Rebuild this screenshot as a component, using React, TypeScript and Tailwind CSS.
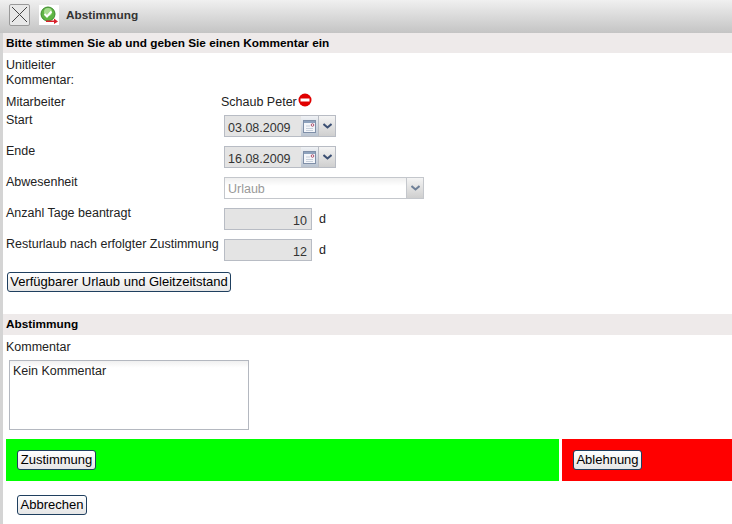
import type { ReactNode } from "react";

const FONT = "font-['Liberation_Sans',Arial,sans-serif]";

function Chevron({ color = "#3b4f73" }: { color?: string }) {
  return (
    <svg width="9" height="6" viewBox="0 0 9 6">
      <path d="M0.500 1 L4.500 4.500 L8.500 1" fill="none" stroke={color} strokeWidth="2" />
    </svg>
  );
}

function CalendarIcon() {
  return (
    <svg width="13" height="13" viewBox="0 0 13 13">
      <rect x="0.500" y="0.500" width="12" height="12" fill="#f4f6fa" stroke="#7f8fa8" />
      <rect x="1" y="1" width="11" height="2" fill="#8ea2bd" />
      <path d="M3 6h4M3 8.500h7M3 10.500h7" stroke="#c6cfdb" />
      <circle cx="9.500" cy="5" r="1.300" fill="#fff" stroke="#a03050" strokeWidth="0.800" />
    </svg>
  );
}

function Row({ label, children }: { label: string; children: ReactNode }) {
  return (
    <div className="flex">
      <div className="w-[221px] shrink-0 pl-[3px] pt-[1px]">{label}</div>
      <div className="mt-[3px]">{children}</div>
    </div>
  );
}

function DateField({ value }: { value: string }) {
  return (
    <div className="flex h-[22px] w-[112px] border border-[#b8bcc4] bg-[#e4e4e4] text-[#333]">
      <div className="flex-1 pl-[3px] pt-[1px] leading-[22px]">{value}</div>
      <div className="flex w-[17px] items-center justify-center bg-gradient-to-b from-[#f0f2f5] to-[#b9c3d0]">
        <CalendarIcon />
      </div>
      <div className="flex w-[17px] items-center justify-center border-l border-[#b8bcc4] bg-gradient-to-b from-[#f4f4f4] to-[#cfcfcf]">
        <Chevron />
      </div>
    </div>
  );
}

function NumberField({ value }: { value: string }) {
  return (
    <div className="flex items-center gap-[7px]">
      <div className="h-[22px] w-[88px] border border-[#b8bcc4] bg-[#e4e4e4] pr-[4px] pt-[1px] text-right leading-[22px] text-[#333]">
        {value}
      </div>
      <span>d</span>
    </div>
  );
}

function Btn({ children, className = "" }: { children: ReactNode; className?: string }) {
  return (
    <button
      type="button"
      className={`h-[20px] rounded-[3px] border border-[#1f3f5f] bg-gradient-to-b from-white to-[#e6e6e6] text-[13px] leading-[18px] text-black ${className}`}
    >
      {children}
    </button>
  );
}

function SectionHead({ children, className = "" }: { children: ReactNode; className?: string }) {
  return (
    <div className={`bg-[#eeeaea] pl-[3px] text-[11.8px] font-bold text-black ${className}`}>{children}</div>
  );
}

export default function App() {
  return (
    <div className={`${FONT} h-[524px] w-[732px] overflow-hidden bg-white text-[12.5px] leading-[14px] text-[#222]`}>
      {/* title bar */}
      <div className="flex h-[33px] items-center bg-gradient-to-b from-[#f0f0f0] to-[#c4c4c4] pl-[9px] pb-[4px]">
        <div className="flex h-[22px] w-[21px] items-center justify-center rounded-[2px] border border-[#999] bg-[#e8e8e8]">
          <svg width="17" height="17" viewBox="0 0 17 17">
            <path d="M1 1 L16 16 M16 1 L1 16" stroke="#444" strokeWidth="1" />
          </svg>
        </div>
        <div className="ml-[9px] flex h-[20px] w-[20px] items-center justify-center bg-white">
          <svg width="18" height="18" viewBox="0 0 18 18">
            <circle cx="8" cy="8" r="7" fill="#5fb544" stroke="#3d8a2e" />
            <circle cx="8" cy="6" r="4" fill="#a6dc8e" />
            <path d="M4.500 8 L7 10.500 L11.500 5.500" fill="none" stroke="#fff" strokeWidth="2" />
            <path d="M6 14.500h8v-2l4 3-4 2.500v-2h-8z" fill="#d8202a" />
          </svg>
        </div>
        <span className="ml-[7px] text-[11.8px] font-bold text-[#333]">Abstimmung</span>
      </div>

      <div className="h-[491px] border-l-[3px] border-[#d4d4d4]">
        <SectionHead className="h-[20px] leading-[20px]">
          Bitte stimmen Sie ab und geben Sie einen Kommentar ein
        </SectionHead>

        <div className="mt-[5px] w-[70px] pl-[3px] leading-[15px]">Unitleiter Kommentar:</div>

        <div className="mt-[7px] flex h-[14px] items-center">
          <div className="w-[218px] shrink-0 pl-[3px]">Mitarbeiter</div>
          <span>Schaub Peter</span>
          <svg className="mb-[4px] ml-[1px]" width="14" height="14" viewBox="0 0 14 14">
            <circle cx="7" cy="7" r="6.500" fill="#e00000" />
            <rect x="2.500" y="5.500" width="9" height="3" fill="#fff" />
          </svg>
        </div>

        <div className="mt-[3px] flex flex-col gap-[6px]">
          <Row label="Start"><DateField value="03.08.2009" /></Row>
          <Row label="Ende"><DateField value="16.08.2009" /></Row>
          <Row label="Abwesenheit">
            <div className="flex h-[22px] w-[200px] border border-[#c4c7cc] text-[#999]">
              <div className="flex-1 bg-gradient-to-b from-[#efefef] to-white to-40% pl-[3px] pt-[1px] leading-[21px]">Urlaub</div>
              <div className="flex w-[17px] items-center justify-center border-l border-[#c4c7cc] bg-gradient-to-b from-[#f4f4f4] to-[#cfcfcf]">
                <Chevron color="#6f8098" />
              </div>
            </div>
          </Row>
          <Row label="Anzahl Tage beantragt"><NumberField value="10" /></Row>
          <Row label="Resturlaub nach erfolgter Zustimmung"><NumberField value="12" /></Row>
        </div>

        <Btn className="mt-[11px] ml-[4px] block w-[224px]">Verfügbarer Urlaub und Gleitzeitstand</Btn>

        <SectionHead className="mt-[22px] h-[21px] leading-[21px]">Abstimmung</SectionHead>

        <div className="mt-[5px] pl-[3px]">Kommentar</div>

        <div className="mt-[6px] ml-[6px] h-[70px] w-[240px] border border-[#b4b8c0] bg-gradient-to-b from-[#f0f0f0] to-white to-10% pl-[3px] pt-[3px] text-[#222]">
          Kein Kommentar
        </div>

        <div className="mt-[9px] flex h-[42px] gap-[3px] pl-[3px]">
          <div className="flex w-[553px] items-center bg-[#00ff00] pl-[11px]">
            <Btn className="w-[79px]">Zustimmung</Btn>
          </div>
          <div className="flex flex-1 items-center bg-[#ff0000] pl-[11px]">
            <Btn className="w-[69px]">Ablehnung</Btn>
          </div>
        </div>

        <Btn className="mt-[14px] ml-[14px] block w-[70px]">Abbrechen</Btn>
      </div>
    </div>
  );
}
